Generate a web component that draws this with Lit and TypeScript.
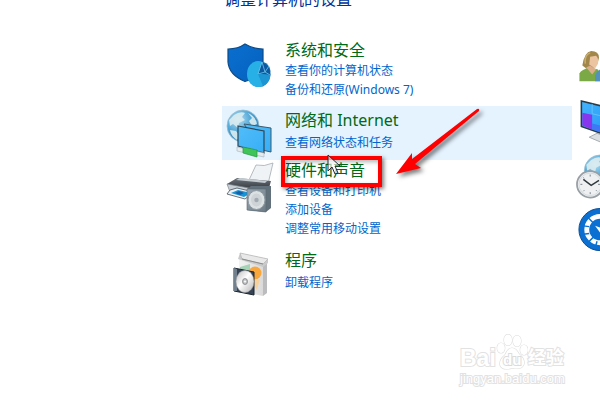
import { LitElement, html, css, svg, TemplateResult } from "lit";
import { customElement } from "lit/decorators.js";
import { classMap } from "lit/directives/class-map.js";

interface Category {
  title: string;
  links: string[];
  icon: TemplateResult;
  active?: boolean;
  marked?: boolean;
}

const shield = svg`
  <defs>
    <linearGradient id="sh" x1="0" y1="0" x2="1" y2="1"><stop offset="0" stop-color="#0a6fd0"/><stop offset="1" stop-color="#0561be"/></linearGradient>
  </defs>
  <path d="M3 9 Q13 9 20 4 Q28 9 38 9 V22 Q37 37 20 41.500 Q4 35 3 22Z" fill="url(#sh)" stroke="#0d4a86" stroke-width="1.200"/>
  <path d="M31 21 Q44 20 45.500 31 Q46 42 38 46.500 L31 47Z" fill="#1173ad"/>
  <ellipse cx="33" cy="34" rx="11" ry="13" fill="#27b0e6"/>
  <path d="M33 34 L37 22 Q45 25 45.500 35Z" fill="#0b57a0"/>
  <path d="M33 34 L37 22 L40 32 L45 35 M33 34 L40 32 L44 26" fill="none" stroke="#6fc8ee" stroke-width=".8"/>
  <path d="M33 34 L45.500 35 Q45 43 38 46 Z" fill="#1c95d2"/>`;

const globe = svg`
  <defs>
    <radialGradient id="gl" cx=".35" cy=".3" r=".8"><stop offset="0" stop-color="#b5dff3"/><stop offset=".5" stop-color="#4fa6d6"/><stop offset="1" stop-color="#2375ad"/></radialGradient>
  </defs>
  <circle cx="18" cy="17" r="16" fill="url(#gl)" stroke="#9dbfd0" stroke-width=".8"/>
  <path d="M9 6 Q15 2 20 4 L17 8 L20 11 L14 14 L13 19 L8 15 L5 17 L4 11Z M23 4 Q31 8 32 15 L27 17 L24 12 L27 9Z M5 21 L11 22 L15 27 L12 31 Q6 27 5 21Z" fill="#dcecef" opacity=".9"/>`;

const network = svg`
  <g transform="translate(0 -1)">${globe}</g>
  <defs><linearGradient id="nt" x1="0" y1="0" x2="1" y2="1"><stop offset="0" stop-color="#52bdf9"/><stop offset="1" stop-color="#38aef6"/></linearGradient></defs>
  <path d="M19 14 L46 18 V42 L37 40Z" fill="url(#nt)" stroke="#3b5a6c" stroke-width="1"/>
  <path d="M13 16 L39 21 V43 L13 36Z" fill="url(#nt)" stroke="#2d4757" stroke-width="1.200"/>
  <path d="M12 37 L39 43 V47 L12 41Z" fill="#e4ebee" stroke="#a4b2b8" stroke-width=".6"/>
  <path d="M18 37 L32 40 V47 L18 43Z" fill="#3fc45a" stroke="#27983c" stroke-width=".7"/>`;

const printer = svg`
  <defs>
    <linearGradient id="pb" x1="0" y1="0" x2="0" y2="1"><stop offset="0" stop-color="#6d747b"/><stop offset="1" stop-color="#292e33"/></linearGradient>
    <linearGradient id="sp" x1="0" y1="0" x2="1" y2="1"><stop offset="0" stop-color="#98a6b1"/><stop offset="1" stop-color="#6c7a85"/></linearGradient>
  </defs>
  <path d="M24 20 L31 5 Q39 7 48 3 L43 24Z" fill="#f0f3f5" stroke="#a3abb2" stroke-width=".8"/>
  <path d="M2 24 L12 18 L46 21 L44 28 L22 31Z" fill="url(#pb)"/>
  <path d="M11 20 L15 18 L42 21 L40 23Z" fill="#c3cbd1"/>
  <path d="M2 24 L24 28 V37 L5 32Z" fill="#c8d0d6" stroke="#7a838b" stroke-width=".7"/>
  <path d="M5 30 L12 28 L29 32 L20 39 L2 34Z" fill="#edf2f5" stroke="#46505a" stroke-width=".8"/>
  <path d="M6 33 L13 30 L26 33 L19 37Z" fill="#1795d8"/>
  <path d="M10 33 L14 31 L19 33 L15 35Z" fill="#175fa8"/>
  <path d="M22 29 L26 26 L46 26 V48 L41 52 L22 50Z" fill="#62707b"/>
  <path d="M22 29 L41 29 V52 L22 50Z" fill="url(#sp)" stroke="#5d6974" stroke-width=".6"/>
  <ellipse cx="31.500" cy="40" rx="8.500" ry="9.500" fill="#dce1e4" stroke="#8c979f"/>
  <ellipse cx="31.500" cy="40" rx="5.500" ry="6.500" fill="#cdd3d7"/>
  <circle cx="31.500" cy="40" r="2.200" fill="#a2abb2"/>`;

const software = svg`
  <defs>
    <linearGradient id="bx" x1="0" y1="0" x2="1" y2="0"><stop offset="0" stop-color="#f3f3f3"/><stop offset="1" stop-color="#dadada"/></linearGradient>
    <linearGradient id="dc" x1="0" y1="0" x2="1" y2="1"><stop offset="0" stop-color="#b9b9b9"/><stop offset=".45" stop-color="#fff"/><stop offset="1" stop-color="#b2b2b2"/></linearGradient>
  </defs>
  <path d="M14 8 L38 15 V46 L14 41Z" fill="url(#bx)"/>
  <path d="M38 14 L42 12 V43 L38 46Z" fill="#bbbcbd"/>
  <path d="M13 9 L15 3 L43 9 V13 L38 17Z" fill="#c9cacb"/>
  <path d="M15 3 L43 9 L38 14 L17 9Z" fill="#e9e9e9" stroke="#b3b3b3" stroke-width=".7"/>
  <path d="M17 9 L38 14" stroke="#8b8b8b"/>
  <path d="M15 17 L25 14 V22 L15 25Z" fill="#a5d3b6"/>
  <circle cx="30" cy="23" r="6.500" fill="#f9a73a"/>
  <path d="M26 31 L35 29 L32 40Z" fill="#f5d1a0"/>
  <path d="M9 18 L29 22 V45 L9 41Z" fill="#354354" stroke="#1b2530"/>
  <path d="M9 18 L12 19 V41 L9 41Z" fill="#72808e"/>
  <ellipse cx="20" cy="31.500" rx="9" ry="11" fill="url(#dc)" stroke="#9c9c9c" stroke-width=".5"/>
  <ellipse cx="20" cy="31.500" rx="2.500" ry="3" fill="#bfc1c3" stroke="#737577" stroke-width=".7"/>
  <circle cx="20" cy="31.500" r="1" fill="#fff"/>`;

const person = svg`
  <g transform="translate(3 4)">
    <path d="M1 32 V24 Q3 20 12 18 L20 20 L26 32Z" fill="#7aa946"/>
    <path d="M17 26 Q19 19 30 18 V32 H17Z" fill="#5492bd"/>
    <path d="M4 16 Q6 2 13 1 Q21 1 21 8 L20 12 L14 20 L8 19Z" fill="#a2874b"/>
    <path d="M12 7 L18 6 Q21 9 20 14 L17 19 L11 15Z" fill="#edc4a1"/>
    <path d="M8 18 L12 16 L18 20 L14 25Z" fill="#dcae8b"/>
    <path d="M7 14 Q6 5 12 3" fill="none" stroke="#c8ae70" stroke-width="1.500"/>
  </g>`;

const monitor = svg`
  <defs><linearGradient id="mn" x1="0" y1="0" x2="1" y2="1"><stop offset="0" stop-color="#42b4fd"/><stop offset="1" stop-color="#1f8ef2"/></linearGradient></defs>
  <path d="M14 38 L22 34 L34 39 L28 44Z" fill="#dce0e3" stroke="#a4abb0"/>
  <path d="M6 1 L46 11 V41 L6 27Z" fill="url(#mn)" stroke="#2b3b46" stroke-width="1.600"/>
  <path d="M7 13 L17 15 V30 L7 26Z" fill="#8736ed"/>
  <path d="M17 24 L46 31 V40 L17 30Z" fill="#3f77f5"/>
  <path d="M17 4 V14 L46 21" fill="none" stroke="#70c5ff" stroke-width=".8"/>`;

const clock = svg`
  <g transform="translate(7 0)">${globe}</g>
  <circle cx="15" cy="31" r="13.500" fill="#eef0f1" stroke="#989fa5" stroke-width="1.800"/>
  <circle cx="15" cy="31" r="11.500" fill="none" stroke="#d5dadd"/>
  <path d="M15 21 V23 M15 39 V41 M5 31 H7 M23 31 H25 M8 24 L9 25 M22 38 L21 37 M8 38 L9 37" stroke="#7a848c"/>
  <path d="M8 26 L16 32 L24 27" fill="none" stroke="#30383e" stroke-width="1.500"/>`;

const access = svg`
  <circle cx="25" cy="22" r="21.500" fill="#0b70d1" stroke="#094c91"/>
  <circle cx="25" cy="22" r="13.500" fill="none" stroke="#fff" stroke-width="5"/>
  <path d="M12 9 L18 15 M6 18 L14 19 M6 27 L14 26 M12 36 L18 30 M20 41 L22 34" stroke="#0b70d1" stroke-width="1.500"/>
  <path d="M20 18 L25 20 V25Z" fill="#fff"/>`;

const categories: Category[] = [
  { title: "系统和安全", links: ["查看你的计算机状态", "备份和还原(Windows 7)"], icon: shield },
  { title: "网络和 Internet", links: ["查看网络状态和任务"], icon: network, active: true },
  { title: "硬件和声音", links: ["查看设备和打印机", "添加设备", "调整常用移动设置"], icon: printer, marked: true },
  { title: "程序", links: ["卸载程序"], icon: software },
];

@customElement("app-root")
export class AppRoot extends LitElement {
  static styles = css`
    :host {
      display: block;
      position: relative;
      min-height: 100vh;
      overflow: hidden;
      background: #fff;
      font-family: "Noto Sans", "Noto Sans CJK SC", sans-serif;
      font-size: 12px;
      line-height: 19px;
    }
    h1, h2, ul { margin: 0; padding: 0; }
    a { text-decoration: none; color: #0066cc; }
    .page {
      display: grid;
      grid-template-columns: 222px minmax(0, 1fr) 28px;
      align-items: start;
    }
    h1 {
      grid-column: 2 / 4;
      margin-top: -11px;
      padding-left: 2px;
      font-size: 16px;
      font-weight: 400;
      line-height: 21px;
      color: #003399;
      white-space: nowrap;
    }
    .list { grid-column: 2; padding-top: 26px; }
    .row {
      display: grid;
      grid-template-columns: 48px minmax(0, 1fr);
      column-gap: 12px;
      padding: 4px 0 7px 3px;
    }
    .row.active { padding: 4px 0 2px 3px; background: #e5f3ff; }
    .row.marked { padding: 0 0 8px 3px; }
    .icon { display: block; width: 48px; height: 48px; overflow: visible; }
    .text { position: relative; min-width: 0; }
    h2 { font-size: 16px; font-weight: 400; line-height: 21px; }
    h2 a { color: #006a14; }
    ul { list-style: none; }
    .single { padding-top: 2px; }
    .frame {
      position: absolute;
      left: -4px;
      top: -4px;
      width: 93px;
      height: 23px;
      border: 4px solid #fe0000;
      box-shadow: 2px 2px 4px rgba(0, 0, 0, 0.5), inset 2px 2px 4px rgba(0, 0, 0, 0.3);
    }
    .cursor { position: absolute; left: 42px; top: -6px; width: 14px; height: 22px; }
    .arrow { position: absolute; left: 110px; top: -56px; width: 96px; height: 80px; overflow: visible; }
    .arrow path { filter: drop-shadow(3px 3px 2px rgba(0, 0, 0, 0.5)); }
    .side {
      grid-column: 3;
      display: flex;
      flex-direction: column;
      padding: 36px 0 0 3px;
      gap: 7px;
    }
    .side .icon { height: 47px; }
    .mark {
      position: absolute;
      right: 32px;
      top: 334px;
      width: 108px;
      color: #fff;
      font-family: "Liberation Sans", "Noto Sans CJK SC", sans-serif;
      -webkit-text-stroke: 2px #e2e2e2;
      paint-order: stroke fill;
    }
    .brand { display: flex; align-items: flex-end; height: 36px; font-size: 23px; line-height: 24px; font-weight: 700; }
    .brand .cn { font-size: 18px; }
    .paw { flex: none; width: 32px; height: 36px; }
    .paw text { font-size: 15px; fill: #fff; stroke: #dcdcdc; stroke-width: 2px; paint-order: stroke; }
    .site { font-size: 13px; line-height: 17px; }
  `;

  private icon(content: TemplateResult) {
    return html`<svg class="icon" viewBox="0 0 48 48" aria-hidden="true">${content}</svg>`;
  }

  private annotations() {
    return html`
      <div class="frame"></div>
      <svg class="cursor" viewBox="0 0 14 22" aria-hidden="true">
        <path d="M1 1 V17 L5 13 L8 20 L11 19 L8 12 H13Z" fill="#fff" fill-opacity=".6" stroke="#252a35"/>
      </svg>
      <svg class="arrow" viewBox="0 0 96 80" aria-hidden="true">
        <path d="M1 70 L17 49 V55 L82 5 Q85 4 84 7 L20 60 L26 64Z" fill="#ff0000"/>
      </svg>`;
  }

  private row(c: Category) {
    return html`
      <section class=${classMap({ row: true, active: !!c.active, marked: !!c.marked })}>
        ${this.icon(c.icon)}
        <div class="text">
          <h2><a href="#">${c.title}</a></h2>
          <ul class=${classMap({ single: c.links.length === 1 })}>
            ${c.links.map((l) => html`<li><a href="#">${l}</a></li>`)}
          </ul>
          ${c.marked ? this.annotations() : ""}
        </div>
      </section>`;
  }

  render() {
    return html`
      <main class="page">
        <h1>调整计算机的设置</h1>
        <div class="list">${categories.map((c) => this.row(c))}</div>
        <div class="side">${[person, monitor, clock, access].map((i) => this.icon(i))}</div>
      </main>
      <div class="mark">
        <div class="brand">
          <span>Bai</span>
          <svg class="paw" viewBox="0 0 32 36" aria-hidden="true">
            <g fill="#fff" stroke="#dedede" stroke-width="1.200">
              <ellipse cx="5" cy="14" rx="3.800" ry="5"/>
              <ellipse cx="12" cy="6" rx="4" ry="5.500"/>
              <ellipse cx="21" cy="7" rx="4" ry="5.500"/>
              <ellipse cx="28" cy="16" rx="3.800" ry="5"/>
              <path d="M16 14 Q20 14 23 20 Q29 25 28 30 Q26 36 17 34 Q6 37 4 31 Q3 26 9 21 Q12 14 16 14Z"/>
            </g>
            <text x="7" y="31">du</text>
          </svg>
          <span class="cn">经验</span>
        </div>
        <div class="site">jingyan.baidu.com</div>
      </div>`;
  }
}
